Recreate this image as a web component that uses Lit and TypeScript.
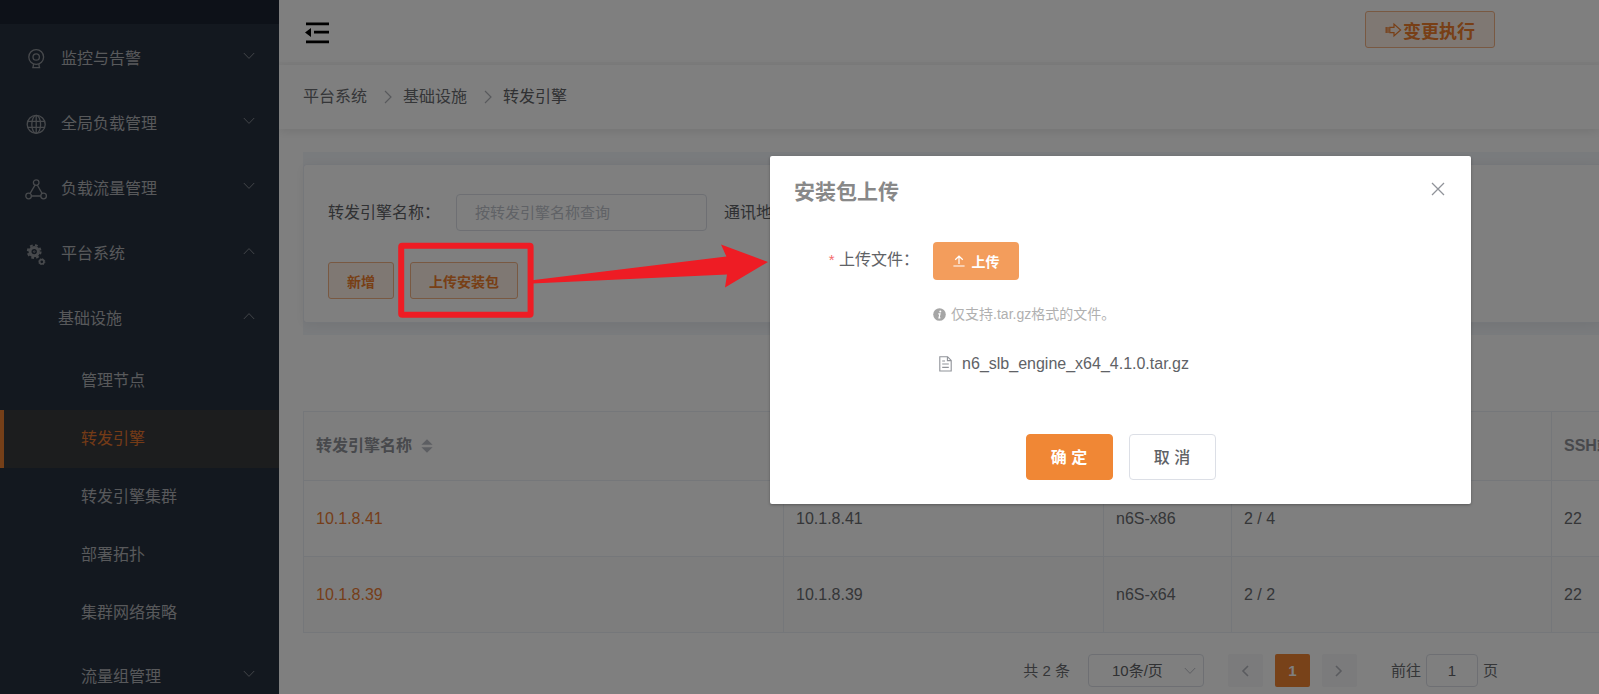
import { LitElement, html, css, svg, nothing } from "lit";
import { customElement, property, state } from "lit/decorators.js";
import { classMap } from "lit/directives/class-map.js";

const fontStack = css`"Liberation Sans", "Noto Sans CJK SC", sans-serif`;

const chevronDown = html`<svg viewBox="0 0 12 8" width="12" height="8" fill="none" stroke="currentColor" aria-hidden="true"><path d="M0.8 1 L6 6.4 L11.2 1" /></svg>`;
const chevronUp = html`<svg viewBox="0 0 12 8" width="12" height="8" fill="none" stroke="currentColor" aria-hidden="true"><path d="M0.8 7 L6 1.6 L11.2 7" /></svg>`;

const menuIcons: Record<string, unknown> = {
  camera: svg`<circle cx="11.2" cy="9" r="7.4"/><circle cx="11.2" cy="9" r="3.2"/><path d="M8.6 16.2 L8 19.4 M13.8 16.2 L14.4 19.4 M7.2 19.6 H15.2"/>`,
  globe: svg`<circle cx="11.2" cy="11.4" r="9"/><ellipse cx="11.2" cy="11.4" rx="4.4" ry="9"/><path d="M11.2 2.4 V20.4 M2.8 8.4 H19.6 M2.8 14.4 H19.6"/>`,
  nodes: svg`<circle cx="11.2" cy="4.6" r="2.8"/><circle cx="3.6" cy="18" r="2.8"/><circle cx="18.6" cy="18" r="2.8"/><path d="M10 7.2 L5 15.6 M12.4 7.2 L17.2 15.6 M6.4 18 H15.8"/>`,
  gears: svg`<circle cx="9.2" cy="8.6" r="4.2" stroke-width="3"/><circle cx="9.2" cy="8.6" r="6.4" stroke-width="2" stroke-dasharray="2.7 2.33"/><circle cx="9.2" cy="8.6" r="0.8" stroke-width="0.8"/><circle cx="16.8" cy="18.8" r="2.2" stroke-width="1.7"/><circle cx="16.8" cy="18.8" r="3.1" stroke-width="0.9" stroke-dasharray="1.3 1.13"/>`,
};

interface MenuEntry {
  label: string;
  icon?: string;
  open?: boolean;
}

const topMenu: MenuEntry[] = [
  { label: "监控与告警", icon: "camera" },
  { label: "全局负载管理", icon: "globe" },
  { label: "负载流量管理", icon: "nodes" },
  { label: "平台系统", icon: "gears", open: true },
  { label: "基础设施", open: true },
];

const subMenu = ["管理节点", "转发引擎", "转发引擎集群", "部署拓扑", "集群网络策略"];

@customElement("side-menu")
export class SideMenu extends LitElement {
  @state() private current = "转发引擎";

  static styles = css`
    :host {
      display: block;
      flex: none;
      width: 279px;
      overflow: hidden;
      background: #26303e;
      color: #b0b2b6;
      font: 16px/24px ${fontStack};
    }
    .brand { height: 24px; background: #1b2230; margin-bottom: 2px; }
    .row {
      display: flex;
      align-items: center;
      box-sizing: border-box;
      width: 100%;
      height: 65px;
      padding: 0 24px 0 25px;
      border: 0;
      background: none;
      color: inherit;
      font: inherit;
      text-align: left;
      cursor: pointer;
    }
    .row.second { padding-left: 58px; }
    .row.third { padding-left: 81px; }
    .icon { flex: none; width: 22px; height: 22px; margin-right: 14px; color: #8f9399; }
    .label { flex: 1; }
    .toggle { display: flex; padding-bottom: 5px; color: #858a92; }
    .group { padding: 1px 0 2px; }
    .leaf {
      display: flex;
      align-items: center;
      box-sizing: border-box;
      height: 58px;
      padding-left: 77px;
      border-left: 4px solid transparent;
      color: inherit;
      text-decoration: none;
    }
    .leaf.active { color: #e8772e; background: #383a3c; border-left-color: #ea7f31; }
  `;

  private row(entry: MenuEntry, level: string) {
    return html`<button class="row ${level}" aria-expanded=${entry.open ? "true" : "false"}>
      ${entry.icon
        ? html`<svg class="icon" viewBox="0 0 22 22" fill="none" stroke="currentColor" stroke-width="1.3" aria-hidden="true">${menuIcons[entry.icon]}</svg>`
        : nothing}
      <span class="label">${entry.label}</span>
      <span class="toggle">${entry.open ? chevronUp : chevronDown}</span>
    </button>`;
  }

  render() {
    return html`
      <div class="brand"></div>
      <nav>
        ${topMenu.map((e) => this.row(e, e.icon ? "first" : "second"))}
        <div class="group">
          ${subMenu.map(
            (name) => html`<a href="#" class=${classMap({ leaf: true, active: name === this.current })}
              @click=${(ev: Event) => { ev.preventDefault(); this.current = name; }}>${name}</a>`
          )}
        </div>
        ${this.row({ label: "流量组管理" }, "third")}
      </nav>
    `;
  }
}

const engines = [
  { name: "10.1.8.41", address: "10.1.8.41", version: "n6S-x86", cores: "2 / 4", port: "22" },
  { name: "10.1.8.39", address: "10.1.8.39", version: "n6S-x64", cores: "2 / 2", port: "22" },
];

@customElement("engine-page")
export class EnginePage extends LitElement {
  static styles = css`
    :host {
      display: block;
      flex: 1;
      min-width: 0;
      overflow: hidden;
      background: #fff;
      color: #6a6c70;
      font: 16px/24px ${fontStack};
    }
    button, input, select { font-family: inherit; }
    .top {
      display: flex;
      justify-content: space-between;
      align-items: flex-start;
      box-sizing: border-box;
      height: 65px;
      padding: 11px 104px 0 25px;
      border-bottom: 3px solid #fafafa;
    }
    .fold { display: flex; margin-top: 10px; padding: 0; border: 0; background: none; color: #000; }
    .plain {
      display: inline-flex;
      align-items: center;
      justify-content: center;
      box-sizing: border-box;
      height: 37px;
      padding: 0 18px;
      border: 1px solid #f2b285;
      border-radius: 3px;
      background: #fef1e7;
      color: #f07e2c;
      font-size: 14px;
      font-weight: 700;
      white-space: nowrap;
    }
    .plain.large { width: 130px; gap: 1px; padding: 0; font-size: 18px; }
    .crumbs {
      display: flex;
      align-items: center;
      height: 64px;
      padding-left: 24px;
      box-shadow: 0 2px 10px rgba(0, 0, 0, 0.1);
      position: relative;
    }
    .crumbs a { color: inherit; text-decoration: none; }
    .crumbs .here { color: #606266; }
    .crumbs svg { margin: 0 11px 0 17px; color: #b0b3b9; }
    .body { padding: 23px 0 0 24px; }
    .band { padding: 12px 0; background: #f3f6fa; }
    .card {
      box-sizing: border-box;
      padding: 29px 24px 23px;
      border: 1px solid #ebeef5;
      border-right: 0;
      border-radius: 4px 0 0 4px;
      background: #fff;
      box-shadow: 0 2px 12px rgba(0, 0, 0, 0.06);
    }
    .filters { display: flex; align-items: center; height: 37px; white-space: nowrap; }
    .filters label { color: #606266; width: 128px; }
    .filters input {
      box-sizing: border-box;
      width: 251px;
      height: 37px;
      margin-right: 17px;
      padding: 0 18px;
      border: 1px solid #dcdfe6;
      border-radius: 4px;
      background: #fff;
      font-size: 15px;
    }
    .filters input::placeholder { color: #c0c4cc; }
    .actions { display: flex; gap: 16px; margin-top: 31px; }
    table {
      width: 100%;
      margin-top: 76px;
      table-layout: fixed;
      border-collapse: separate;
      border-spacing: 0;
      border-top: 1px solid #ebeef5;
      border-left: 1px solid #ebeef5;
    }
    th, td {
      box-sizing: border-box;
      padding: 0 12px;
      border-bottom: 1px solid #ebeef5;
      text-align: left;
      white-space: nowrap;
    }
    th:not(:last-child), td:not(:last-child) { border-right: 1px solid #ebeef5; }
    th { height: 69px; background: #fcfcfd; color: #909399; }
    td { height: 76px; padding-top: 1px; }
    tr.stripe td { background: #fbfbfb; }
    td a { color: #ec7d35; text-decoration: none; }
    .name { width: 480px; }
    .address { width: 320px; }
    .version { width: 128px; }
    .cores { width: 320px; }
    .sort { margin-left: 5px; vertical-align: -2px; color: #b9bcc4; }
    .pager {
      display: flex;
      align-items: center;
      justify-content: flex-end;
      margin-top: 21px;
      padding-right: 101px;
      font-size: 15px;
      white-space: nowrap;
    }
    .size { display: grid; align-items: center; margin: 0 24px 0 18px; }
    .size select, .size svg { grid-area: 1 / 1; }
    .size svg { justify-self: end; margin-right: 8px; color: #b9bcc4; pointer-events: none; }
    select, .jump {
      box-sizing: border-box;
      height: 33px;
      border: 1px solid #dcdfe6;
      border-radius: 4px;
      background: #fff;
      color: #606266;
      font-size: 15px;
    }
    select { width: 116px; padding: 0 0 0 23px; appearance: none; }
    .jump { width: 52px; margin: 0 5px; padding: 0; text-align: center; }
    .page {
      display: flex;
      align-items: center;
      justify-content: center;
      width: 35px;
      height: 33px;
      padding: 0;
      border: 0;
      border-radius: 2px;
      background: #f6f6f8;
      color: #b4b7be;
      font-size: 15px;
      font-weight: 700;
    }
    .page.on { margin: 0 12px; background: #f08432; color: #fff; }
    .goto { display: flex; align-items: center; margin-left: 34px; }
  `;

  render() {
    const crumb = html`<svg viewBox="0 0 8 14" width="8" height="14" fill="none" stroke="currentColor" stroke-width="1.2" aria-hidden="true"><path d="M1 1 L7 7 L1 13" /></svg>`;
    return html`
      <header class="top">
        <button class="fold" aria-label="收起菜单">
          <svg viewBox="0 0 26 24" width="26" height="24" fill="currentColor" aria-hidden="true">
            <path d="M2 1.4 H25 V4.2 H2 Z M10 9.8 H25 V12.6 H10 Z M2 19.4 H25 V22.2 H2 Z M1 11.4 L7 7 V16 Z" />
          </svg>
        </button>
        <button class="plain large">
          <svg viewBox="0 0 17 16" width="17" height="16" fill="none" stroke="currentColor" stroke-width="1.2" aria-hidden="true">
            <path d="M4.8 5.4 H9 V2 L15.6 8 L9 14 V10.6 H4.8 Z" /><path d="M1.2 5 V11 M3 5 V11" stroke-width="1.3" />
          </svg>变更执行
        </button>
      </header>
      <nav class="crumbs">
        <a href="#">平台系统</a>${crumb}<a href="#">基础设施</a>${crumb}<span class="here">转发引擎</span>
      </nav>
      <div class="body">
        <div class="band">
          <section class="card">
            <div class="filters">
              <label for="engine">转发引擎名称：</label>
              <input id="engine" placeholder="按转发引擎名称查询" />
              <label for="address">通讯地址：</label>
              <input id="address" />
            </div>
            <div class="actions">
              <button class="plain">新增</button>
              <button class="plain">上传安装包</button>
            </div>
          </section>
        </div>
        <table>
          <thead>
            <tr>
              <th class="name">转发引擎名称
                <svg class="sort" viewBox="0 0 12 14" width="12" height="14" fill="currentColor" aria-hidden="true"><path d="M0.4 5.8 L6 0.2 L11.6 5.8 Z M0.4 8.2 L6 13.8 L11.6 8.2 Z" /></svg>
              </th>
              <th class="address">通讯地址</th>
              <th class="version">版本</th>
              <th class="cores">核数</th>
              <th>SSH端口</th>
            </tr>
          </thead>
          <tbody>
            ${engines.map(
              (e, i) => html`<tr class=${classMap({ stripe: i % 2 === 1 })}>
                <td><a href="#">${e.name}</a></td>
                <td>${e.address}</td>
                <td>${e.version}</td>
                <td>${e.cores}</td>
                <td>${e.port}</td>
              </tr>`
            )}
          </tbody>
        </table>
        <div class="pager">
          <span>共 2 条</span>
          <div class="size">
            <select aria-label="每页条数"><option>10条/页</option></select>
            ${chevronDown}
          </div>
          <button class="page" aria-label="上一页"><svg viewBox="0 0 8 12" width="8" height="12" fill="none" stroke="currentColor" stroke-width="1.6"><path d="M7 1 L2 6 L7 11" /></svg></button>
          <button class="page on">1</button>
          <button class="page" aria-label="下一页"><svg viewBox="0 0 8 12" width="8" height="12" fill="none" stroke="currentColor" stroke-width="1.6"><path d="M1 1 L6 6 L1 11" /></svg></button>
          <label class="goto">前往<input class="jump" value="1" />页</label>
        </div>
      </div>
    `;
  }
}

@customElement("upload-dialog")
export class UploadDialog extends LitElement {
  @property() file = "n6_slb_engine_x64_4.1.0.tar.gz";

  static styles = css`
    :host {
      display: block;
      box-sizing: border-box;
      width: 701px;
      padding: 24px;
      border-radius: 2px;
      background: #fff;
      box-shadow: 0 1px 3px rgba(0, 0, 0, 0.3);
      color: #606266;
      font: 16px/24px ${fontStack};
    }
    header { display: flex; align-items: flex-start; justify-content: space-between; height: 24px; }
    h2 { margin: 0; color: #888; font-size: 21px; line-height: 24px; }
    button { box-sizing: border-box; border-radius: 4px; font-family: inherit; font-weight: 700; }
    .close { display: flex; padding: 2px; border: 0; background: none; color: #909399; }
    .field { display: grid; grid-template-columns: 139px 1fr; margin-top: 38px; }
    .field label { padding: 6px 14px 0 0; text-align: right; white-space: nowrap; }
    .star { color: #f56c6c; font-size: 15px; }
    .content { display: flex; flex-direction: column; align-items: flex-start; }
    .upload {
      display: flex;
      align-items: center;
      justify-content: center;
      gap: 7px;
      width: 86px;
      height: 38px;
      padding: 0;
      border: 0;
      background: #f39d5c;
      color: #fff;
      font-size: 14px;
    }
    .hint { display: flex; align-items: center; gap: 5px; margin: 22px 0 0; color: #b0b0b0; font-size: 14px; }
    .file { display: flex; align-items: center; gap: 10px; margin: 26px 0 0 6px; }
    .file svg { color: #909399; }
    footer { display: flex; justify-content: center; gap: 16px; margin-top: 58px; }
    .act { width: 87px; height: 46px; padding: 0 0 2px; border: 1px solid #f08735; font-size: 16px; }
    .act.primary { background: #f08735; color: #fff; }
    .act.ghost { border-color: #dcdfe6; background: #fff; color: #606266; font-weight: 500; }
  `;

  render() {
    return html`
      <header>
        <h2>安装包上传</h2>
        <button class="close" aria-label="关闭">
          <svg viewBox="0 0 14 14" width="14" height="14" fill="none" stroke="currentColor" stroke-width="1.3"><path d="M1 1 L13 13 M13 1 L1 13" /></svg>
        </button>
      </header>
      <div class="field">
        <label for="pick"><span class="star">*</span> 上传文件：</label>
        <div class="content">
          <button class="upload" id="pick">
            <svg viewBox="0 0 12 12" width="12" height="12" fill="none" stroke="currentColor" stroke-width="1.2" aria-hidden="true"><path d="M6 9 V1.2 M2.2 4.8 L6 1.2 L9.8 4.8 M0.4 11 H11.6" /></svg>上传
          </button>
          <p class="hint">
            <svg viewBox="0 0 13 13" width="13" height="13" aria-hidden="true"><circle cx="6.5" cy="6.5" r="6.3" fill="#a6a6a6" /><circle cx="7.3" cy="3.4" r="1" fill="#fff" /><path d="M5.3 5.9 H7 L6 9.8 H7.4" fill="none" stroke="#fff" stroke-width="1.2" /></svg>
            仅支持.tar.gz格式的文件。
          </p>
          <p class="file">
            <svg viewBox="0 0 13 16" width="13" height="16" fill="none" stroke="currentColor" stroke-width="1.1" aria-hidden="true"><path d="M0.8 0.8 H8.6 L12.2 4.4 V15 H0.8 Z M8.4 0.8 V4.6 H12.2 M3.2 5 H6 M3.2 8 H9.8 M3.2 11.4 H9.8" /></svg>
            <span>${this.file}</span>
          </p>
        </div>
      </div>
      <footer>
        <button class="act primary">确 定</button>
        <button class="act ghost">取 消</button>
      </footer>
    `;
  }
}

@customElement("app-root")
export class AppRoot extends LitElement {
  static styles = css`
    :host { display: block; position: relative; height: 100vh; overflow: hidden; }
    .shell { display: flex; height: 100%; }
    .mask {
      position: absolute;
      inset: 0;
      display: flex;
      justify-content: flex-end;
      align-items: flex-start;
      box-sizing: border-box;
      padding: 156px 8% 0 0;
      background: rgba(0, 0, 0, 0.5);
    }
    .callout { position: absolute; left: 398px; top: 242px; pointer-events: none; }
  `;

  render() {
    return html`
      <div class="shell">
        <side-menu></side-menu>
        <engine-page></engine-page>
      </div>
      <div class="mask"><upload-dialog role="dialog" aria-label="安装包上传"></upload-dialog></div>
      <svg class="callout" viewBox="0 0 372 80" width="372" height="80" aria-hidden="true">
        <rect x="3.2" y="3.8" width="129.4" height="69" rx="1" fill="none" stroke="#ee1c24" stroke-width="6" />
        <path d="M134 38.2 L328.4 14.6 L323 2.4 L370 20 L327 45.4 L329 32.6 L134 41.6 Z" fill="#ee1c24" />
      </svg>
    `;
  }
}
